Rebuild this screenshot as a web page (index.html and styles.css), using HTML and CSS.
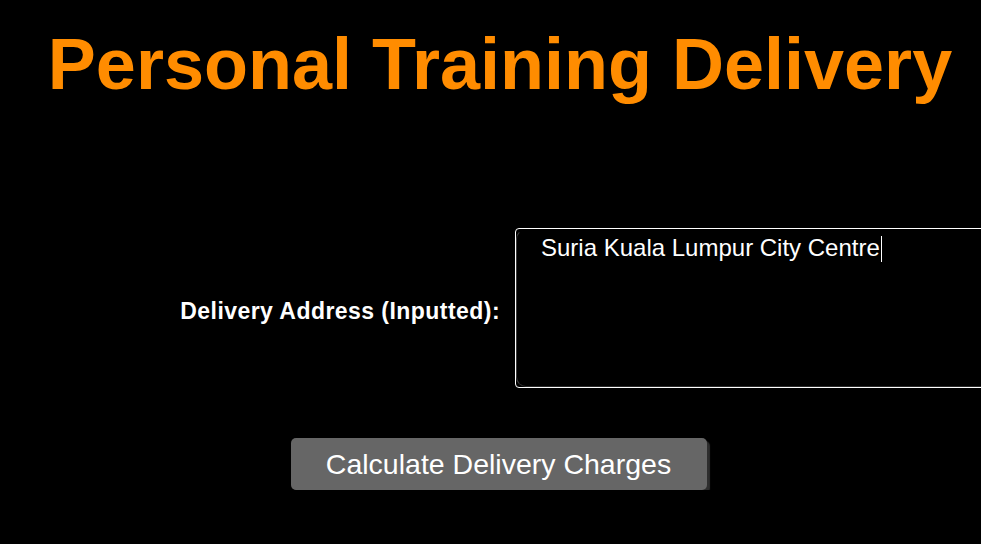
FILE: index.html
```html
<!DOCTYPE html>
<html lang="en">
<head>
<meta charset="utf-8">
<title>Personal Training Delivery</title>
<link rel="stylesheet" href="styles.css">
</head>
<body>
<div class="page">
  <h1 class="title">Personal Training Delivery</h1>
  <form class="form">
    <div class="row">
      <label class="label" for="addr">Delivery Address (Inputted):</label>
      <div class="field">
        <textarea id="addr" class="addr">Suria Kuala Lumpur City Centre</textarea>
        <div class="caret-layer" aria-hidden="true"><span class="ghost">Suria Kuala Lumpur City Centre</span><span class="caret"></span></div>
      </div>
    </div>
    <div class="actions">
      <button type="button" class="btn">Calculate Delivery Charges</button>
    </div>
  </form>
</div>
</body>
</html>
```

FILE: styles.css
```css
html, body {
  margin: 0;
  padding: 0;
  background: #000;
  overflow: hidden;
}
body {
  font-family: "Liberation Sans", Arial, sans-serif;
  color: #fff;
}
.page {
  width: 1000px;
}
.title {
  margin: 23px 0 0;
  font-size: 72px;
  line-height: 82px;
  font-weight: bold;
  color: #ff8c00;
  text-align: center;
}
.form {
  margin: 0;
  padding-top: 123px;
}
.row {
  display: grid;
  grid-template-columns: 500px 1fr;
  align-items: center;
}
.label {
  justify-self: end;
  font-size: 23px;
  letter-spacing: 0.45px;
  font-weight: bold;
  padding-top: 6px;
}
.field {
  position: relative;
  margin-left: 15px;
  width: 500px;
  height: 158px;
  border: 1px solid #fff;
  border-radius: 4px;
  display: flex;
}
.addr {
  flex: 1;
  margin: 0;
  background: #000;
  color: #fff;
  font-family: "Liberation Sans", Arial, sans-serif;
  font-size: 24px;
  line-height: 28px;
  padding: 4px 24px 3px;
  border: 1px solid;
  border-color: #000 #000 #2a2a2a #3a3a3a;
  border-radius: 10px;
  resize: none;
  outline: none;
}
.caret-layer {
  position: absolute;
  top: 1px;
  left: 1px;
  padding: 4px 24px 3px;
  font-size: 24px;
  line-height: 28px;
  white-space: pre;
  pointer-events: none;
}
.ghost {
  color: transparent;
}
.caret {
  display: inline-block;
  width: 1px;
  height: 26px;
  margin-left: 1px;
  background: #fff;
  vertical-align: -6px;
}
.actions {
  display: flex;
  justify-content: center;
  padding-top: 50px;
}
.btn {
  width: 416px;
  height: 52px;
  margin-right: 3px;
  background: #666;
  color: #fff;
  border: none;
  border-radius: 5px;
  box-shadow: 3px 3px 1px #2e2e2e;
  font-family: "Liberation Sans", Arial, sans-serif;
  font-size: 28.5px;
  padding: 0;
}
```
